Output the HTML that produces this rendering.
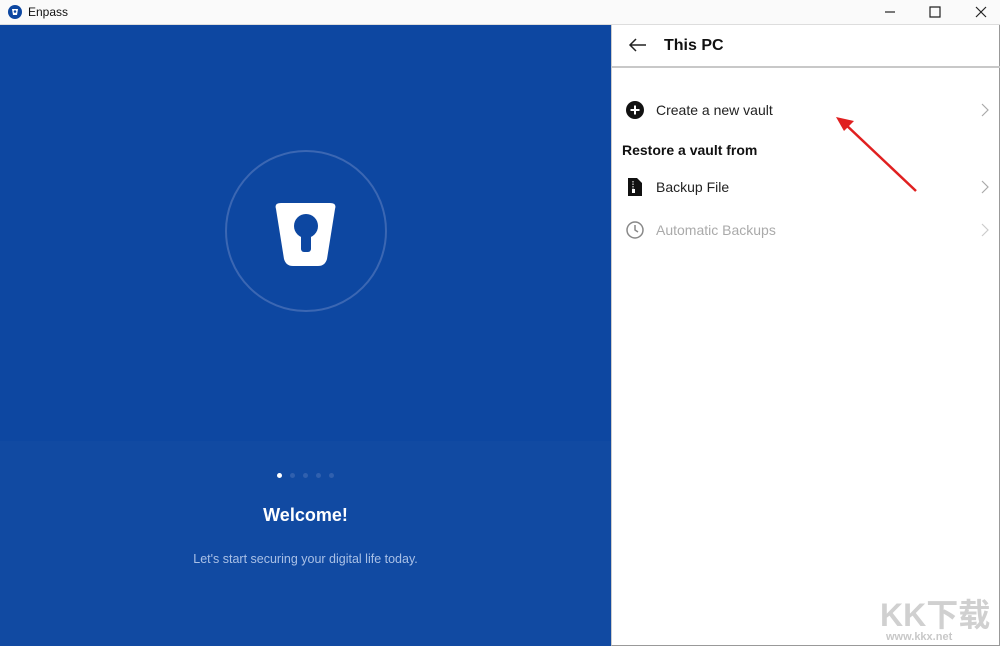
<!DOCTYPE html>
<html><head><style>
*{margin:0;padding:0;box-sizing:border-box}
body{width:1000px;height:646px;overflow:hidden;background:#fff;font-family:"Liberation Sans",sans-serif;position:relative}
.tb{position:absolute;left:0;top:0;width:1000px;height:25px;background:#fafafa;border-bottom:1px solid #ddd}
.left{position:absolute;left:0;top:25px;width:611px;height:621px;background:#0d47a1}
.lb{position:absolute;left:0;top:416px;width:611px;height:205px;background:#114aa2}
.right{position:absolute;left:611px;top:25px;width:389px;height:621px;background:#fff;border-left:1px solid #ccc;border-right:1px solid #999;border-bottom:1px solid #999}
.t{position:absolute;font-size:14px;color:#222}
.chev{position:absolute;right:10px;width:8px;height:14px}
</style></head><body>
<div class="tb">
<svg style="position:absolute;left:8px;top:5px" width="14" height="14"><circle cx="7" cy="7" r="7" fill="#0d47a1"/><path d="M4 4h6l-1 6H5z" fill="#fff"/><circle cx="7" cy="6.5" r="1.3" fill="#0d47a1"/></svg>
<span style="position:absolute;left:28px;top:5px;font-size:12px;color:#111">Enpass</span>
<svg style="position:absolute;left:880px;top:3px" width="110" height="18" stroke="#222" fill="none" stroke-width="1.2"><path d="M5 9h10"/><path d="M50 4h10v10H50z"/><path d="M96 4l10 10M106 4l-10 10"/></svg>
</div>
<div class="left">
<div class="lb"></div>
<svg style="position:absolute;left:224px;top:124px" width="164" height="164"><circle cx="82" cy="82" r="80" fill="none" stroke="#3b67b3" stroke-width="2"/><path d="M52 60 Q50 54 57 54 L106 54 Q113 54 111 60 L103 110 Q101 117 94 117 L69 117 Q62 117 60 110 Z" fill="#fff"/><circle cx="82" cy="77" r="12" fill="#0d47a1"/><rect x="77" y="80" width="10" height="23" rx="3" fill="#0d47a1"/></svg>
<div style="position:absolute;left:277px;top:448px;width:5px;height:5px;border-radius:50%;background:#fff"></div>
<div style="position:absolute;left:290px;top:448px;width:5px;height:5px;border-radius:50%;background:#3060ae"></div>
<div style="position:absolute;left:303px;top:448px;width:5px;height:5px;border-radius:50%;background:#3060ae"></div>
<div style="position:absolute;left:316px;top:448px;width:5px;height:5px;border-radius:50%;background:#3060ae"></div>
<div style="position:absolute;left:329px;top:448px;width:5px;height:5px;border-radius:50%;background:#3060ae"></div>
<div style="position:absolute;left:0;width:611px;top:480px;text-align:center;color:#fff;font-weight:bold;font-size:18px">Welcome!</div>
<div style="position:absolute;left:0;width:611px;top:527px;text-align:center;color:#a9c0e6;font-size:12.5px">Let's start securing your digital life today.</div>
</div>
<div class="right">
<svg style="position:absolute;left:16px;top:12px" width="20" height="16" stroke="#222" fill="none" stroke-width="1.5"><path d="M18 8H2M8 2L2 8l6 6"/></svg>
<div style="position:absolute;left:52px;top:12px;font-size:16px;font-weight:bold;color:#111">This PC</div>
<div style="position:absolute;left:0;top:41px;width:388px;height:2px;background:#c8c8c8"></div>
<svg style="position:absolute;left:14px;top:76px" width="18" height="18"><circle cx="9" cy="9" r="9" fill="#111"/><path d="M9 4.5v9M4.5 9h9" stroke="#fff" stroke-width="2"/></svg>
<div class="t" style="left:44px;top:77px">Create a new vault</div><svg class="chev" style="top:78px" stroke="#aaa" fill="none" stroke-width="1.2"><path d="M1 1l6 6-6 6"/></svg>
<div class="t" style="left:10px;top:117px;font-weight:bold;color:#111">Restore a vault from</div>
<svg style="position:absolute;left:16px;top:153px" width="14" height="18"><path d="M0 0h9l5 5v13H0z" fill="#111"/><path d="M5 3v9" stroke="#fff" stroke-width="1" stroke-dasharray="1.5 1"/><rect x="4" y="11" width="3" height="4" fill="#fff"/></svg>
<div class="t" style="left:44px;top:154px">Backup File</div><svg class="chev" style="top:155px" stroke="#aaa" fill="none" stroke-width="1.2"><path d="M1 1l6 6-6 6"/></svg>
<svg style="position:absolute;left:14px;top:196px" width="18" height="18" stroke="#888" fill="none" stroke-width="1.5"><circle cx="9" cy="9" r="8"/><path d="M9 4v5l3 2"/></svg>
<div class="t" style="left:44px;top:197px;color:#aaa">Automatic Backups</div><svg class="chev" style="top:198px" stroke="#ccc" fill="none" stroke-width="1.2"><path d="M1 1l6 6-6 6"/></svg>
<svg style="position:absolute;left:218px;top:90px" width="90" height="80"><path d="M86 76L14 8" stroke="#e02020" stroke-width="2.5"/><path d="M6 2l18 4-10 10z" fill="#e02020"/></svg>
</div>
<div style="position:absolute;left:880px;top:590px;font-size:32px;font-weight:bold;color:#d0d0d0;font-family:'Liberation Sans','Noto Sans CJK SC',sans-serif">KK下载</div>
<div style="position:absolute;left:886px;top:631px;font-size:11px;font-weight:bold;color:#c8c8c8">www.kkx.net</div>
</body></html>
